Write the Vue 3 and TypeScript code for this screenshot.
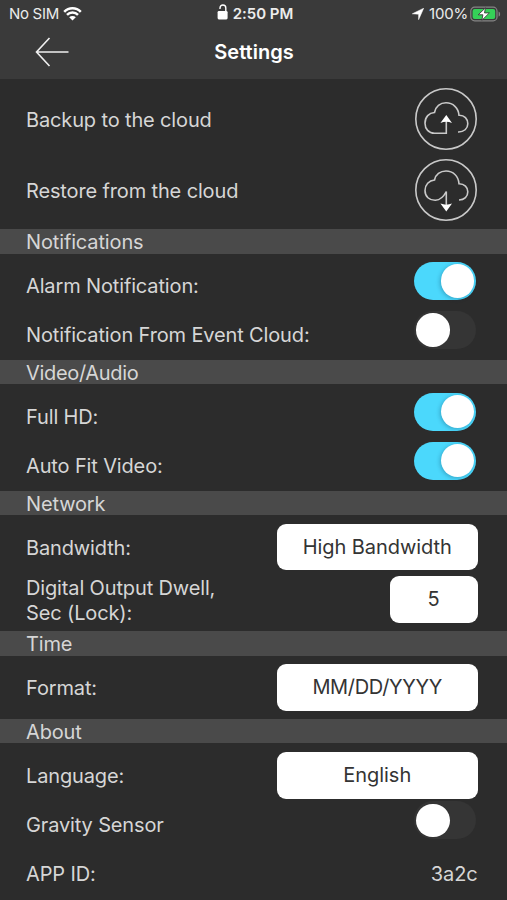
<script setup lang="ts">
import { ref } from 'vue'

const alarm = ref(true)
const eventCloud = ref(false)
const fullHd = ref(true)
const autoFit = ref(true)
const gravity = ref(false)
</script>

<template>
  <main class="screen">
    <header class="top">
      <div class="status">
        <div class="carrier">
          <span>No SIM</span>
          <svg class="wifi" width="19" height="15" viewBox="0 0 19 15">
            <g fill="none" stroke="#fff" stroke-width="2.5">
              <path d="M1.2 5.8a11.6 11.6 0 0 1 16.6 0" />
              <path d="M4 8.9a7.6 7.6 0 0 1 11 0" />
            </g>
            <path d="M9.5 14.6L6.2 11.3a4.6 4.6 0 0 1 6.6 0z" fill="#fff" />
          </svg>
        </div>
        <div class="clock">
          <svg width="12" height="16" viewBox="0 0 12 16">
            <rect x="0.6" y="7" width="10" height="8.4" rx="1.3" fill="#fff" />
            <path d="M3 5V3.9a2.9 2.9 0 0 1 5.8 0V7.5" fill="none" stroke="#fff" stroke-width="1.4" />
          </svg>
          <span>2:50 PM</span>
        </div>
        <div class="power">
          <svg width="12" height="12" viewBox="0 0 12 12">
            <path d="M11.7 0.2L6.6 11.7V6.2L0.3 5.8z" fill="#fff" stroke="#fff" stroke-width="0.5" />
          </svg>
          <span>100%</span>
          <svg width="31" height="16" viewBox="0 0 31 16">
            <rect x="0.8" y="1.2" width="26.2" height="13.6" rx="3.8" fill="none" stroke="#858585" stroke-width="1.2" />
            <path d="M28.6 5.4c2 .7 2 4.5 0 5.2z" fill="#858585" />
            <rect x="2.6" y="3" width="22.6" height="10" rx="2" fill="#35d058" />
            <path d="M15.5 1.8L8.2 8.8h4.7l-1.1 5.6 7.6-7.5h-4.9z" fill="#fff" stroke="#3a3a3a" stroke-width="0.9" />
          </svg>
        </div>
      </div>
      <div class="nav">
        <svg class="back" width="34" height="30" viewBox="0 0 34 30">
          <path d="M33.5 15H1.5M14.5 1L1.5 15l13 14" fill="none" stroke="#f0f0f0" stroke-width="1.6" />
        </svg>
        <h1>Settings</h1>
      </div>
    </header>

    <section class="cloud-group">
      <div class="cloud-row">
        <span>Backup to the cloud</span>
        <svg width="62" height="62" viewBox="0 0 62 62">
          <circle cx="31" cy="31" r="30.2" fill="none" stroke="#c9c9c9" stroke-width="1.6" />
          <path
            d="M31.3 29V45.2H19.5C13.8 45.2 10 41 10 35.2C10 29 14 24.8 19.5 24.5C20.5 18.5 25.2 14.8 31 14.8C38 14.8 43.5 20 44 27.2C49.5 27 52.8 31 52.8 35.7C52.8 40.5 49 44.2 43 44"
            fill="none" stroke="#c9c9c9" stroke-width="1.6" />
          <path d="M31.3 27L37 35q-5.7-2.4-11.6 0z" fill="#fff" />
        </svg>
      </div>
      <div class="cloud-row">
        <span>Restore from the cloud</span>
        <svg width="62" height="62" viewBox="0 0 62 62">
          <circle cx="31" cy="31" r="30.2" fill="none" stroke="#c9c9c9" stroke-width="1.6" />
          <path
            d="M31.3 47V32.5C28.5 38 25.5 41 20.5 41.3C14.3 41.5 10 37.5 10 31.5C10 25.8 14 21.5 19.5 21C20.5 15.5 25.2 12 31 12C38 12 43.5 17 44 24.8C49.5 24.8 52.8 28.5 52.8 32.8C52.8 37.5 49.5 41 44 41"
            fill="none" stroke="#c9c9c9" stroke-width="1.6" />
          <path d="M31.3 52.4L37 44.6q-5.7 2.2-11.6 0z" fill="#fff" />
        </svg>
      </div>
    </section>

    <h2>Notifications</h2>
    <section class="switch-group">
      <label class="row">
        <span>Alarm Notification:</span>
        <button class="toggle" :class="{ on: alarm }" @click="alarm = !alarm"><i></i></button>
      </label>
      <label class="row">
        <span>Notification From Event Cloud:</span>
        <button class="toggle" :class="{ on: eventCloud }" @click="eventCloud = !eventCloud"><i></i></button>
      </label>
    </section>

    <h2 class="tight">Video/Audio</h2>
    <section class="switch-group">
      <label class="row">
        <span>Full HD:</span>
        <button class="toggle" :class="{ on: fullHd }" @click="fullHd = !fullHd"><i></i></button>
      </label>
      <label class="row">
        <span>Auto Fit Video:</span>
        <button class="toggle" :class="{ on: autoFit }" @click="autoFit = !autoFit"><i></i></button>
      </label>
    </section>

    <h2>Network</h2>
    <section class="network-group">
      <div class="field">
        <span>Bandwidth:</span>
        <button class="value">High Bandwidth</button>
      </div>
      <div class="field">
        <span>Digital Output Dwell,<br />Sec (Lock):</span>
        <button class="value short">5</button>
      </div>
    </section>

    <h2>Time</h2>
    <section class="time-group">
      <div class="field">
        <span>Format:</span>
        <button class="value tight">MM/DD/YYYY</button>
      </div>
    </section>

    <h2>About</h2>
    <section class="about-group">
      <div class="field">
        <span>Language:</span>
        <button class="value">English</button>
      </div>
      <label class="row gravity">
        <span>Gravity Sensor</span>
        <button class="toggle" :class="{ on: gravity }" @click="gravity = !gravity"><i></i></button>
      </label>
      <div class="row">
        <span>APP ID:</span>
        <span>3a2c</span>
      </div>
    </section>
  </main>
</template>

<style>
body {
  background: #2c2c2c;
}
</style>

<style scoped>
* {
  box-sizing: border-box;
}

.screen {
  width: 507px;
  height: 900px;
  overflow: hidden;
  background: #2c2c2c;
  color: #d6d6d6;
  font: 400 20px/24.5px Inter, "Liberation Sans", sans-serif;
  letter-spacing: -0.14px;
}

button {
  border: 0;
  padding: 0;
  font: inherit;
}

.top {
  height: 79px;
  background: #3a3a3a;
  color: #fff;
  letter-spacing: 0;
}

.status {
  display: grid;
  grid-template-columns: 1fr auto 1fr;
  align-items: center;
  height: 27px;
  padding: 0 6px 0 9px;
  font-size: 15px;
  line-height: 27px;
  color: #ececec;
}

.carrier,
.clock,
.power {
  display: flex;
  align-items: center;
}

.carrier {
  gap: 4px;
  letter-spacing: -0.3px;
}

.clock {
  gap: 4px;
  font-weight: 600;
  letter-spacing: -0.05px;
}

.clock svg {
  margin-top: -4px;
}

.power {
  justify-content: flex-end;
  gap: 2px;
  letter-spacing: -0.2px;
}

.power span {
  margin-left: 3px;
}

.nav {
  display: grid;
  grid-template-columns: 80px 1fr 80px;
  align-items: center;
  height: 50px;
}

.back {
  margin-left: 35px;
}

h1 {
  margin: 0;
  padding: 1px 0 0 1px;
  text-align: center;
  font-size: 20px;
  font-weight: 600;
}

h2 {
  height: 24.4px;
  margin: 0;
  padding-left: 26px;
  background: #4a4a4a;
  font-size: 20px;
  font-weight: 400;
  line-height: 26px;
}

.cloud-group {
  height: 150.4px;
  padding: 5px 30px 0 26px;
}

.cloud-row {
  display: flex;
  align-items: center;
  justify-content: space-between;
  height: 70.6px;
}

.cloud-row span,
.field span {
  padding-top: 2px;
}

.switch-group {
  height: 106.2px;
  padding: 8.3px 29.5px 0 26px;
}

.row {
  display: flex;
  align-items: flex-start;
  justify-content: space-between;
  height: 49px;
}

.row span {
  padding-top: 12px;
}

.field {
  display: flex;
  align-items: center;
  justify-content: space-between;
  height: 47px;
}

.network-group {
  display: flex;
  flex-direction: column;
  gap: 5.7px;
  height: 116.3px;
  padding: 8.5px 29.5px 0 26px;
}

.time-group {
  height: 63.4px;
  padding: 8.3px 29.5px 0 26px;
}

.about-group {
  padding: 8.5px 29.5px 0 26px;
}

.gravity {
  margin-top: 2.5px;
}

.value {
  width: 200.5px;
  height: 46.5px;
  border-radius: 9px;
  background: #fff;
  color: #343434;
  letter-spacing: -0.05px;
}

.tight {
  letter-spacing: -0.32px;
}

.short {
  width: 88px;
}

.toggle {
  flex: none;
  width: 62.5px;
  height: 38px;
  margin-right: 1.2px;
  padding: 2px 2.3px;
  border-radius: 19px;
  background: #353535;
}

.toggle i {
  display: block;
  width: 33.5px;
  height: 33.5px;
  border-radius: 50%;
  background: #fff;
}

.toggle.on {
  background: #4bd8fc;
}

.toggle.on i {
  margin-left: auto;
  box-shadow: -1px 1px 4px rgba(0, 50, 80, 0.3);
}
</style>
